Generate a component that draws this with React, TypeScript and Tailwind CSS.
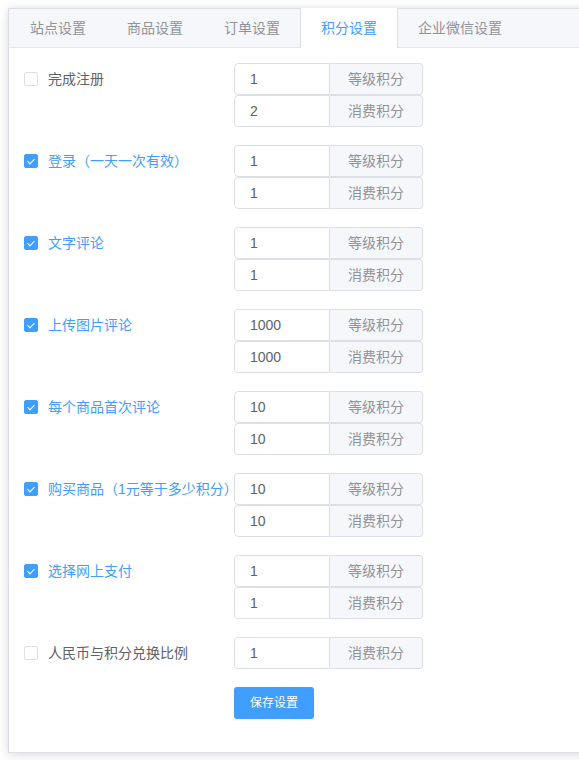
// Points settings page (积分设置)
const tabs = ['站点设置', '商品设置', '订单设置', '积分设置', '企业微信设置']

type Rule = {
  label: string
  checked: boolean
  level?: string
  spend: string
}

const rules: Rule[] = [
  { label: '完成注册', checked: false, level: '1', spend: '2' },
  { label: '登录（一天一次有效）', checked: true, level: '1', spend: '1' },
  { label: '文字评论', checked: true, level: '1', spend: '1' },
  { label: '上传图片评论', checked: true, level: '1000', spend: '1000' },
  { label: '每个商品首次评论', checked: true, level: '10', spend: '10' },
  { label: '购买商品（1元等于多少积分）', checked: true, level: '10', spend: '10' },
  { label: '选择网上支付', checked: true, level: '1', spend: '1' },
  { label: '人民币与积分兑换比例', checked: false, spend: '1' },
]

function Checkbox({ checked }: { checked: boolean }) {
  return (
    <span
      className={`w-[14px] h-[14px] rounded-[2px] border flex items-center justify-center shrink-0 ${
        checked ? 'bg-[#409EFF] border-[#409EFF]' : 'bg-white border-[#DCDFE6]'
      }`}
    >
      {checked && <span className="w-[4px] h-[7px] border-r border-b border-white rotate-45 -mt-[2px]" />}
    </span>
  )
}

function AppendInput({ value, append }: { value: string; append: string }) {
  return (
    <div className="flex h-8">
      <div className="w-[96px] h-8 border border-[#DCDFE6] rounded-l-[4px] bg-white px-[15px] flex items-center text-[14px] text-[#606266]">
        {value}
      </div>
      <div className="w-[93px] h-8 border border-l-0 border-[#DCDFE6] rounded-r-[4px] bg-[#F5F7FA] flex items-center justify-center text-[14px] text-[#909399]">
        {append}
      </div>
    </div>
  )
}

export default function App() {
  return (
    <div
      className="min-h-screen bg-white pt-2 pl-2 overflow-hidden"
      style={{ fontFamily: '"Liberation Sans", "Noto Sans CJK SC", sans-serif' }}
    >
      {/* Border card */}
      <div className="bg-white border border-[#DCDFE6] mr-[-24px] shadow-[0_2px_12px_0_rgba(0,0,0,0.12),0_0_6px_0_rgba(0,0,0,0.04)]">
        {/* Tab header */}
        <div className="h-[39px] bg-[#F5F7FA] border-b border-[#E4E7ED] flex">
          {tabs.map((t, i) => {
            const active = i === 3
            return (
              <div
                key={t}
                className={`h-[39px] px-5 text-[14px] leading-[38px] border-x whitespace-nowrap ${i > 0 ? '-ml-px' : ''} ${
                  active
                    ? 'bg-white border-[#DCDFE6] text-[#409EFF] relative z-10 -mt-px h-[40px] leading-[40px]'
                    : 'border-transparent text-[#909399]'
                }`}
              >
                {t}
              </div>
            )
          })}
        </div>

        {/* Form */}
        <div className="p-[15px]">
          {rules.map((r) => (
            <div key={r.label} className="flex mb-[18px]">
              <div className="w-[210px] h-8 flex items-center gap-[10px] shrink-0">
                <Checkbox checked={r.checked} />
                <span className={`text-[14px] whitespace-nowrap ${r.checked ? 'text-[#409EFF]' : 'text-[#606266]'}`}>
                  {r.label}
                </span>
              </div>
              <div className="flex flex-col">
                {r.level && <AppendInput value={r.level} append="等级积分" />}
                <AppendInput value={r.spend} append="消费积分" />
              </div>
            </div>
          ))}

          {/* Save */}
          <div className="flex mb-[18px]">
            <div className="w-[210px] shrink-0" />
            <button className="h-8 w-[80px] rounded-[3px] bg-[#409EFF] text-white text-[12px]">保存设置</button>
          </div>
        </div>
      </div>
    </div>
  )
}
